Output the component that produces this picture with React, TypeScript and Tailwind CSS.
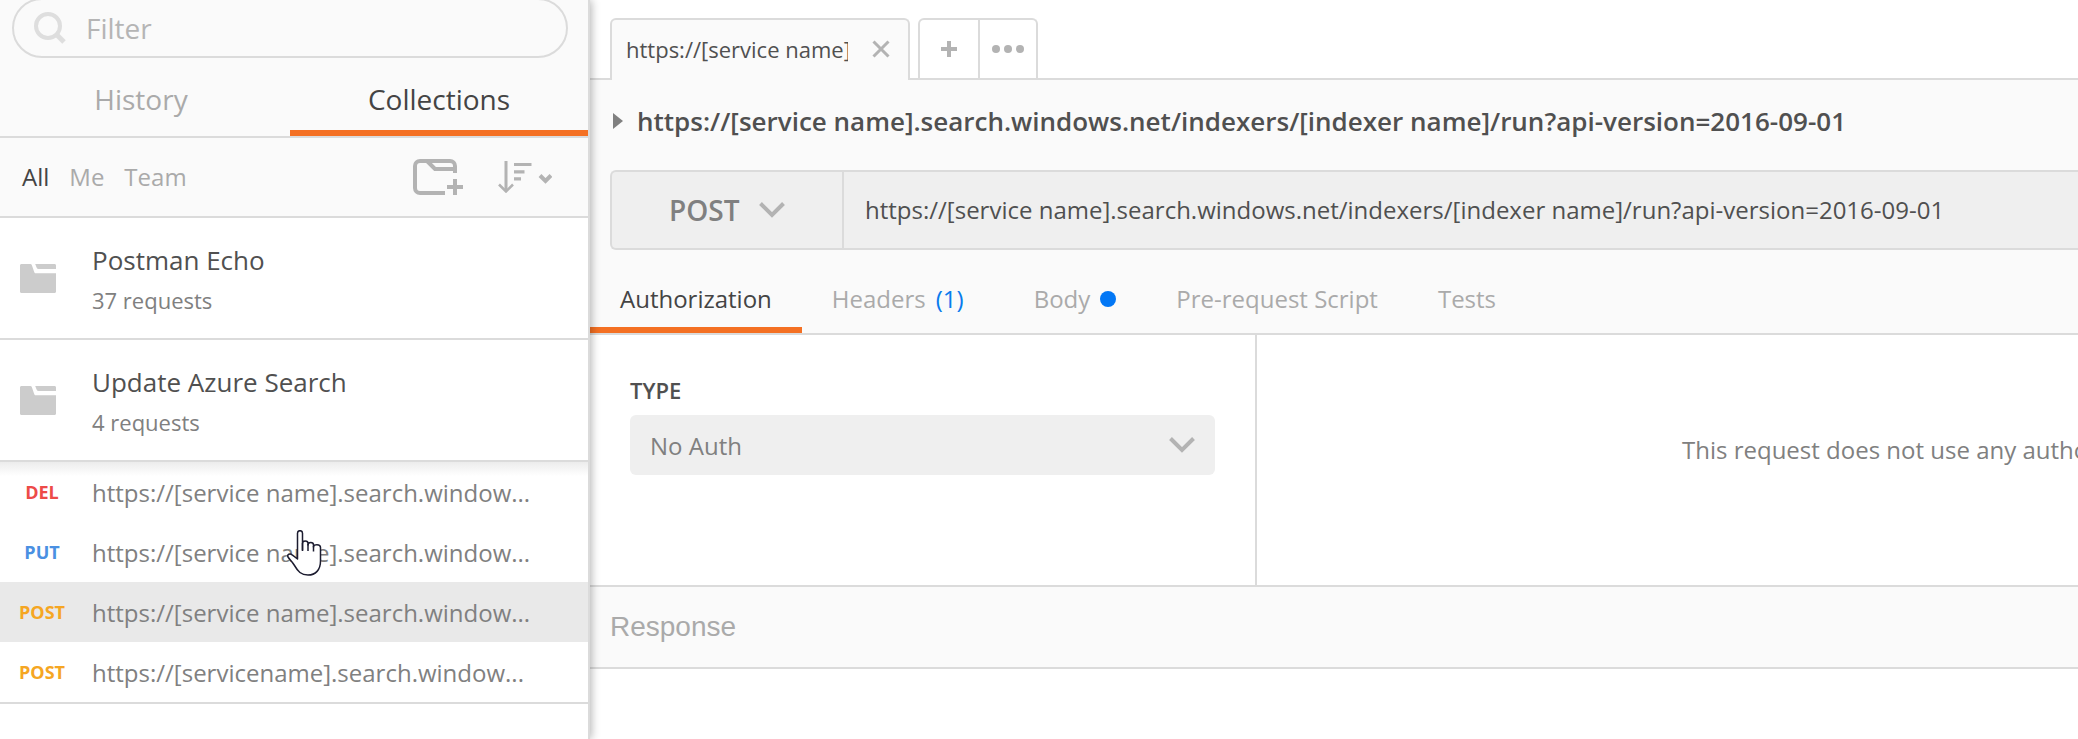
import React from "react";

type Verb = "DEL" | "PUT" | "POST";

const verbColor: Record<Verb, string> = {
  DEL: "text-[#ed4b48]",
  PUT: "text-[#4a90e2]",
  POST: "text-[#f5a623]",
};

const collections = [
  { name: "Postman Echo", count: "37 requests" },
  { name: "Update Azure Search", count: "4 requests" },
];

const requests: { verb: Verb; url: string; active?: boolean }[] = [
  { verb: "DEL", url: "https://[service name].search.window..." },
  { verb: "PUT", url: "https://[service name].search.window..." },
  { verb: "POST", url: "https://[service name].search.window...", active: true },
  { verb: "POST", url: "https://[servicename].search.window..." },
];

const requestUrl =
  "https://[service name].search.windows.net/indexers/[indexer name]/run?api-version=2016-09-01";

function SearchIcon() {
  return (
    <svg className="h-8 w-8 shrink-0" viewBox="0 0 32 32" fill="none" stroke="#dedede" strokeWidth="4">
      <circle cx="14" cy="14" r="12" />
      <path d="M22.5 22.5l7.5 7.5" strokeWidth="5" />
    </svg>
  );
}

function NewFolderIcon() {
  return (
    <svg className="h-9 w-[50px]" viewBox="0 0 50 36" fill="none" stroke="#b3b3b3" strokeWidth="4">
      <path d="M32 34H7a5 5 0 0 1-5-5V7a5 5 0 0 1 5-5h30a5 5 0 0 1 5 5v7" />
      <path d="M14 2l8 8h20" />
      <path d="M34 28h16M42 20v16" />
    </svg>
  );
}

function SortIcon() {
  return (
    <svg className="h-8 w-[54px]" viewBox="0 0 54 32" fill="none" stroke="#b3b3b3">
      <path d="M8 0v29" strokeWidth="3" />
      <path d="M1 23.5l7 7 7-7" strokeWidth="2.5" />
      <path d="M16 3.5h17.5M16 10.8h10.5M16 17.8h7" strokeWidth="3.2" />
      <path d="M42 14.5l5.500 5.500 5.500-5.500" strokeWidth="4" />
    </svg>
  );
}

function FolderIcon() {
  return (
    <svg className="h-[29px] w-9 shrink-0" viewBox="0 0 36 29" fill="#cccccc">
      <path d="M1.500 0h8.800c.8 0 1.300.4 1.600 1.200l2.300 6.800c.3.900.8 1.200 1.600 1.200H36v18.300c0 .9-.6 1.500-1.500 1.500h-33C.6 29 0 28.400 0 27.500v-26C0 .6.600 0 1.500 0z" />
      <path d="M15.200 0h19.300c.9 0 1.500.6 1.500 1.500V5H18.500c-.9 0-1.500-.4-1.800-1.200z" />
    </svg>
  );
}

function ChevronIcon() {
  return (
    <svg className="pointer-events-none h-4 w-[26px]" viewBox="0 0 26 16" fill="none" stroke="#b3b3b3" strokeWidth="4">
      <path d="M1.500 1.500L13 13 24.500 1.500" />
    </svg>
  );
}

function HandCursor() {
  return (
    <svg className="pointer-events-none absolute top-[530px] left-[287px] h-[46px] w-[35px]" viewBox="0 0 35 46" fill="#fff" stroke="#1c1c30" strokeWidth="1.500" strokeLinejoin="round">
      <path d="M10.500 29V3.200C10.500 -.2 15.500 -.2 15.500 3.200V20V13.500C15.500 10.300 21 10.300 21 13.500V15C21 11.800 26.500 11.800 26.500 15V17C26.500 13.800 33.500 13.800 33.500 17.500V31C33.500 40 28.500 45 21 45C14 45 11 41.500 7.500 35.500C5 31.500 2.500 29.500 1 27C-.2 24.500 3 22.800 5.500 25.200Z" />
      <path d="M15.500 13v8M21 14v7M26.500 16v5.500" fill="none" />
    </svg>
  );
}

function Sidebar() {
  return (
    <aside className="relative z-10 w-[590px] shrink-0 border-r-2 border-[#dbdbdb] bg-white shadow-[1px_0_9px_rgba(0,0,0,0.32)]">
      <div className="bg-[#fafafa]">
        <label className="-mt-0.5 mr-5 ml-3 flex h-[60px] items-center gap-5 rounded-full border-2 border-[#dbdbdb] pl-5">
          <SearchIcon />
          <input
            aria-label="Filter"
            placeholder="Filter"
            className="min-w-0 flex-1 bg-transparent text-[28px] outline-none placeholder:text-[#b5b5b5]"
          />
        </label>
        <nav className="-ml-2 grid h-20 grid-cols-2 border-b-2 border-[#dbdbdb] text-[28px]">
          <button className="border-b-[6px] border-transparent pt-2.5 text-[#aaaaaa]">History</button>
          <button className="border-b-[6px] border-[#f47023] pt-2.5 text-[#444444]">Collections</button>
        </nav>
        <div className="flex h-20 items-center justify-between border-b-2 border-[#dbdbdb] pr-9 pl-[22px] text-2xl text-[#aaaaaa]">
          <div className="flex gap-5">
            <button className="text-[#444444]">All</button>
            <button>Me</button>
            <button>Team</button>
          </div>
          <div className="flex items-center gap-[35px]">
            <button aria-label="New collection"><NewFolderIcon /></button>
            <button aria-label="Sort collections"><SortIcon /></button>
          </div>
        </div>
      </div>
      <ul>
        {collections.map((c) => (
          <li key={c.name} className="flex h-[122px] items-center gap-9 border-b-2 border-[#dbdbdb] pl-5">
            <FolderIcon />
            <div className="pt-[3px]">
              <div className="text-[26px] leading-10 text-[#505050]">{c.name}</div>
              <div className="text-[22px] leading-10 text-[#808080]">{c.count}</div>
            </div>
          </li>
        ))}
      </ul>
      <ul className="border-b-2 border-[#dbdbdb] bg-linear-to-b from-[#ececec] to-white bg-[length:100%_14px] bg-no-repeat">
        {requests.map((r, i) => (
          <li key={i}>
            <a href="#" className={r.active ? "flex h-[60px] items-center bg-[#e9e9e9]" : "flex h-[60px] items-center"}>
              <span className={`w-[84px] text-center text-lg font-bold ${verbColor[r.verb]}`}>{r.verb}</span>
              <span className="pt-0.5 pl-2 text-2xl text-[#808080]">{r.url}</span>
            </a>
          </li>
        ))}
      </ul>
      <HandCursor />
    </aside>
  );
}

function TabBar() {
  return (
    <div className="flex h-20 items-end border-b-2 border-[#dbdbdb] bg-white pl-5">
      <div className="-mb-0.5 flex h-[62px] w-[300px] items-center rounded-t-md border-2 border-b-0 border-[#dbdbdb] bg-[#fafafa] pr-[18px] pb-0.5 pl-3.5">
        <a href="#" className="w-[222px] overflow-hidden text-[22px] whitespace-nowrap text-[#505050]">
          https://[service name]
        </a>
        <button aria-label="Close tab" className="ml-auto">
          <svg className="h-[18px] w-[18px]" viewBox="0 0 18 18" stroke="#b3b3b3" strokeWidth="3">
            <path d="M1.500 1.500l15 15M16.500 1.500l-15 15" />
          </svg>
        </button>
      </div>
      <div className="ml-2 flex h-[60px] w-[120px] divide-x-2 divide-[#dbdbdb] rounded-t-md border-2 border-b-0 border-[#dbdbdb]">
        <button aria-label="New tab" className="flex w-[60px] items-center justify-center">
          <svg className="h-4 w-4" viewBox="0 0 16 16" stroke="#b3b3b3" strokeWidth="4">
            <path d="M0 8h16M8 0v16" />
          </svg>
        </button>
        <button aria-label="Tab options" className="flex flex-1 items-center justify-center">
          <svg className="h-2 w-8" viewBox="0 0 32 8" fill="#b3b3b3">
            <circle cx="4" cy="4" r="4" />
            <circle cx="16" cy="4" r="4" />
            <circle cx="28" cy="4" r="4" />
          </svg>
        </button>
      </div>
    </div>
  );
}

function RequestTabs() {
  return (
    <nav className="flex h-[85px] border-b-2 border-[#dbdbdb] text-2xl whitespace-nowrap text-[#aaaaaa]">
      <button className="border-b-[6px] border-[#f47023] px-[30px] pt-5 text-[#444444]">Authorization</button>
      <button className="flex items-center gap-2.5 border-b-[6px] border-transparent pt-5 pr-10 pl-[30px]">
        Headers <span className="text-[#097bed]">(1)</span>
      </button>
      <button className="flex items-center gap-2.5 border-b-[6px] border-transparent px-[30px] pt-5">
        Body <span className="h-4 w-4 rounded-full bg-[#0277f5]" />
      </button>
      <button className="border-b-[6px] border-transparent px-[30px] pt-5">Pre-request Script</button>
      <button className="border-b-[6px] border-transparent px-[30px] pt-5">Tests</button>
    </nav>
  );
}

export default function App() {
  return (
    <div className="flex min-h-screen overflow-hidden bg-white font-['Open_Sans','Noto_Sans',sans-serif]">
      <Sidebar />
      <main className="min-w-0 flex-1">
        <TabBar />
        <div className="bg-[#fafafa]">
          <div className="flex h-[90px] items-center gap-3.5 pb-2 pl-[23px]">
            <button aria-label="Show description">
              <svg className="h-4 w-[10px]" viewBox="0 0 10 16" fill="#808080">
                <path d="M0 0l10 8-10 8z" />
              </svg>
            </button>
            <h1 className="text-[26px] font-semibold whitespace-nowrap text-[#505050]">{requestUrl}</h1>
          </div>
          <div className="ml-5 flex h-20 rounded-l-md border-2 border-r-0 border-[#dbdbdb] bg-[#efefef]">
            <label className="grid w-[232px] shrink-0 items-center border-r-2 border-[#dbdbdb]">
              <select
                aria-label="Method"
                className="col-start-1 row-start-1 h-full w-full appearance-none pl-[57px] text-[28px] font-semibold text-[#808080] outline-none"
              >
                <option>POST</option>
              </select>
              <span className="col-start-1 row-start-1 justify-self-end pr-[57px]">
                <ChevronIcon />
              </span>
            </label>
            <input
              aria-label="Request URL"
              defaultValue={requestUrl}
              className="min-w-0 flex-1 bg-transparent pl-[21px] text-2xl text-[#505050] outline-none"
            />
          </div>
          <RequestTabs />
        </div>
        <div className="flex h-[250px] overflow-hidden">
          <section className="w-[667px] shrink-0 border-r-2 border-[#dbdbdb] px-10 pt-10">
            <label htmlFor="auth-type" className="block pb-2.5 text-[22px] leading-[30px] font-semibold text-[#505050]">
              TYPE
            </label>
            <div className="grid h-[60px] items-center rounded-md bg-[#efefef]">
              <select
                id="auth-type"
                className="col-start-1 row-start-1 h-full w-full appearance-none pt-0.5 pl-5 text-2xl text-[#808080] outline-none"
              >
                <option>No Auth</option>
              </select>
              <span className="col-start-1 row-start-1 justify-self-end pr-5">
                <ChevronIcon />
              </span>
            </div>
          </section>
          <section className="flex min-w-0 flex-1 items-center overflow-hidden pb-5 pl-[425px]">
            <p className="text-2xl whitespace-nowrap text-[#808080]">This request does not use any authorization.</p>
          </section>
        </div>
        <h2 className="flex h-[84px] items-center border-y-2 border-[#dbdbdb] bg-[#fafafa] pl-5 font-['Liberation_Sans',sans-serif] text-[28px] text-[#aaaaaa]">
          Response
        </h2>
      </main>
    </div>
  );
}
